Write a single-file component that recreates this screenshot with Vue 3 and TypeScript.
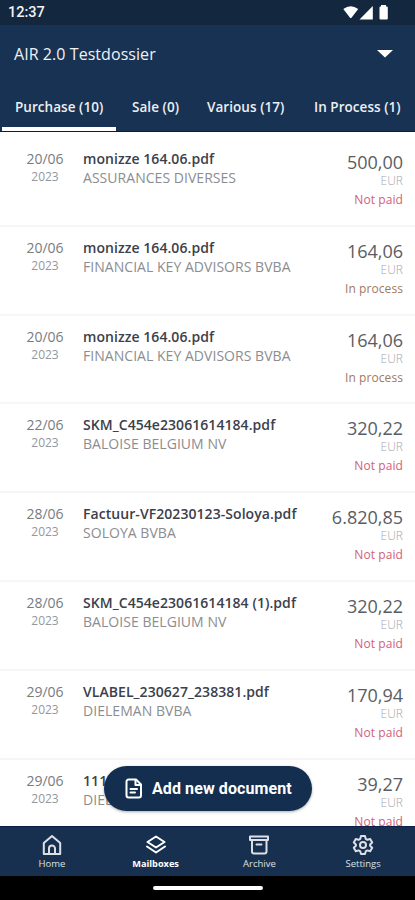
<script setup lang="ts">
interface Doc {
  day: string
  year: string
  file: string
  company: string
  amount: string
  status: string
}

const tabs: { label: string; key: string }[] = [
  { label: 'Purchase (10)', key: 'purchase' },
  { label: 'Sale (0)', key: 'sale' },
  { label: 'Various (17)', key: 'various' },
  { label: 'In Process (1)', key: 'process' },
]

const docs: Doc[] = [
  { day: '20/06', year: '2023', file: 'monizze 164.06.pdf', company: 'ASSURANCES DIVERSES', amount: '500,00', status: 'Not paid' },
  { day: '20/06', year: '2023', file: 'monizze 164.06.pdf', company: 'FINANCIAL KEY ADVISORS BVBA', amount: '164,06', status: 'In process' },
  { day: '20/06', year: '2023', file: 'monizze 164.06.pdf', company: 'FINANCIAL KEY ADVISORS BVBA', amount: '164,06', status: 'In process' },
  { day: '22/06', year: '2023', file: 'SKM_C454e23061614184.pdf', company: 'BALOISE BELGIUM NV', amount: '320,22', status: 'Not paid' },
  { day: '28/06', year: '2023', file: 'Factuur-VF20230123-Soloya.pdf', company: 'SOLOYA BVBA', amount: '6.820,85', status: 'Not paid' },
  { day: '28/06', year: '2023', file: 'SKM_C454e23061614184 (1).pdf', company: 'BALOISE BELGIUM NV', amount: '320,22', status: 'Not paid' },
  { day: '29/06', year: '2023', file: 'VLABEL_230627_238381.pdf', company: 'DIELEMAN BVBA', amount: '170,94', status: 'Not paid' },
  { day: '29/06', year: '2023', file: '111', company: 'DIEL', amount: '39,27', status: 'Not paid' },
]
</script>

<template>
  <div class="screen">
    <header class="status">
      <span class="clock">12:37</span>
      <svg class="signals" width="48" height="16" viewBox="0 0 48 16">
        <path d="M.3 4Q7.700-1.500 15.200 4L8.500 12.800Q7.800 13.500 7 12.800z" />
        <path d="M16.500 14.500H29.800V1z" />
        <path d="M36.500 2.500Q36.500 1.500 37.500 1.500H38V0h5v1.500h.8q1 0 1 1V13.500q0 1-1 1h-6.300q-1 0-1-1z" />
      </svg>
    </header>
    <div class="dossier">
      <span class="title">AIR 2.0 Testdossier</span>
      <svg class="caret" width="16" height="8" viewBox="0 0 16 8"><path d="M0 0h16L8 7.500z" /></svg>
    </div>
    <nav class="tabs">
      <div v-for="(t, i) in tabs" :key="t.key" class="tab" :class="[t.key, { active: i === 0 }]">
        <span>{{ t.label }}</span>
      </div>
    </nav>
    <main class="list">
      <article v-for="(d, i) in docs" :key="i" class="row">
        <div class="date">
          <span class="day">{{ d.day }}</span>
          <span class="year">{{ d.year }}</span>
        </div>
        <div class="info">
          <span class="file">{{ d.file }}</span>
          <span class="company">{{ d.company }}</span>
        </div>
        <div class="money">
          <span class="amount">{{ d.amount }}</span>
          <span class="cur">EUR</span>
          <span class="state" :class="{ pending: d.status === 'In process' }">{{ d.status }}</span>
        </div>
      </article>
    </main>
    <button class="add">
      <svg width="20" height="22" viewBox="0 0 20 22">
        <path d="M4.500 1.500h7.500l5 5v11a2 2 0 0 1-2 2H4.500a2 2 0 0 1-2-2V3.500a2 2 0 0 1 2-2z" />
        <path d="M11.500 2V7H17M6.500 11h6.500M6.500 14.500h4.500" />
      </svg>
      <span>Add new document</span>
    </button>
    <nav class="bottom">
      <div class="item">
        <svg width="22" height="22" viewBox="0 0 22 22">
          <path d="M2.800 9L11 2l8.200 7V20H2.800z" /><path d="M8 20V14.500a3 3 0 0 1 6 0V20" />
        </svg>
        <span>Home</span>
      </div>
      <div class="item current">
        <svg width="22" height="22" viewBox="0 0 22 22">
          <path d="M11 2.500L19.500 8 11 13.500 2.500 8zM2 12.500l9 6 9-6" />
        </svg>
        <span>Mailboxes</span>
      </div>
      <div class="item">
        <svg width="22" height="22" viewBox="0 0 22 22">
          <path d="M2 2.500h18v3.500H2zM4 6v11.500a2 2 0 0 0 2 2h10.500a2 2 0 0 0 2-2V6M8.500 10.500h5" />
        </svg>
        <span>Archive</span>
      </div>
      <div class="item">
        <svg width="22" height="22" viewBox="0 0 22 22">
          <path d="M9 2h4l.7 2.800 1.700 1L18.200 5l2 3.500-2.100 2v1.200l2.100 2-2 3.500-2.800-.8-1.700 1L13 20H9l-.7-2.600-1.700-1-2.800.8-2-3.500 2.100-2v-1.200l-2.100-2 2-3.500 2.800.8 1.700-1z" />
          <circle cx="11" cy="11" r="3" />
        </svg>
        <span>Settings</span>
      </div>
    </nav>
    <footer class="gesture"><i></i></footer>
  </div>
</template>

<style>
body { margin: 0; background: #fff; }
</style>

<style scoped>
.screen {
  position: relative;
  display: flex;
  flex-direction: column;
  width: 415px;
  height: 900px;
  overflow: hidden;
  background: #fff;
  font-family: "Open Sans", "Noto Sans", sans-serif;
}
.status {
  display: flex;
  flex: 0 0 25px;
  align-items: center;
  justify-content: space-between;
  box-sizing: border-box;
  padding: 1px 24px 0 8px;
  background: #13273f;
  color: #f3f3f3;
}
.clock { font: 500 14.500px/20px Roboto, sans-serif; }
.signals { fill: #fff; }
.dossier {
  display: flex;
  flex: 0 0 57px;
  align-items: center;
  justify-content: space-between;
  box-sizing: border-box;
  padding: 1px 22px 0 14px;
  background: #183253;
  color: #f0f1f3;
}
.title { font-size: 16px; letter-spacing: .06px; }
.caret { fill: #fff; }
.tabs {
  display: flex;
  flex: 0 0 49px;
  box-sizing: border-box;
  padding-left: 2px;
  border-bottom: 1px solid #10174a;
  background: #183253;
  color: #edeff2;
  font-size: 13.500px;
  font-weight: 600;
}
.tab {
  box-sizing: border-box;
  height: 49px;
  padding: 15px 0 0 13px;
  line-height: 20px;
  letter-spacing: .05px;
  white-space: nowrap;
}
.purchase { width: 114px; }
.sale { width: 76px; padding-left: 16px; }
.various { width: 106px; padding-left: 15px; }
.process { width: 115px; padding-left: 16px; }
.active { border-bottom: 4px solid #fff; }
.list {
  flex: 1;
  min-height: 0;
  overflow: hidden;
  padding-top: 6px;
}
.row {
  display: flex;
  box-sizing: border-box;
  height: 88.800px;
  padding: 11px 12px 0 22px;
  border-bottom: 2px solid #f6f6f7;
}
.row span { display: block; white-space: nowrap; }
.date { width: 46px; text-align: center; color: #797b7f; }
.day { font-size: 14px; line-height: 20px; }
.year { color: #95979b; font-size: 12px; line-height: 16px; }
.info { flex: 1; padding-left: 15px; }
.file { color: #3c404b; font-size: 14px; font-weight: 600; line-height: 20px; letter-spacing: .06px; }
.company { color: #8b8d91; font-size: 14px; line-height: 18px; letter-spacing: .04px; }
.money { text-align: right; }
.amount { color: #5a5d64; font-size: 18px; line-height: 26px; }
.cur { color: #a6a8ac; font-size: 12px; font-weight: 300; line-height: 12px; }
.state { margin-top: 4px; color: #d0627a; font-size: 12px; line-height: 18px; letter-spacing: .08px; }
.state.pending { color: #a07a5e; }
.add {
  position: absolute;
  left: 104px;
  top: 766px;
  display: flex;
  align-items: center;
  gap: 8px;
  width: 208px;
  height: 45px;
  padding: 0 0 0 20px;
  border: 0;
  border-radius: 23px;
  background: #142e50;
  box-shadow: 0 1px 3px #0005;
  color: #fff;
  font: 700 16px Roboto, sans-serif;
  letter-spacing: .09px;
  white-space: nowrap;
}
.add svg, .item svg { fill: none; stroke: currentColor; stroke-width: 2; stroke-linejoin: round; stroke-linecap: round; }
.bottom {
  display: grid;
  grid-template-columns: repeat(4, 1fr);
  flex: 0 0 50px;
  box-sizing: border-box;
  border-top: 1px solid #0c1f46;
  background: #17304f;
  color: #dce0e6;
  font-size: 9.500px;
}
.item { display: flex; flex-direction: column; align-items: center; padding-top: 7px; }
.item span { line-height: 14px; margin-top: 1px; }
.current { color: #fff; }
.current span { font-size: 9.200px; font-weight: 700; }
.gesture {
  display: flex;
  flex: 0 0 24px;
  justify-content: center;
  background: #000;
}
.gesture i { width: 110px; height: 4px; margin-top: 10px; border-radius: 2px; background: #fff; }
</style>
